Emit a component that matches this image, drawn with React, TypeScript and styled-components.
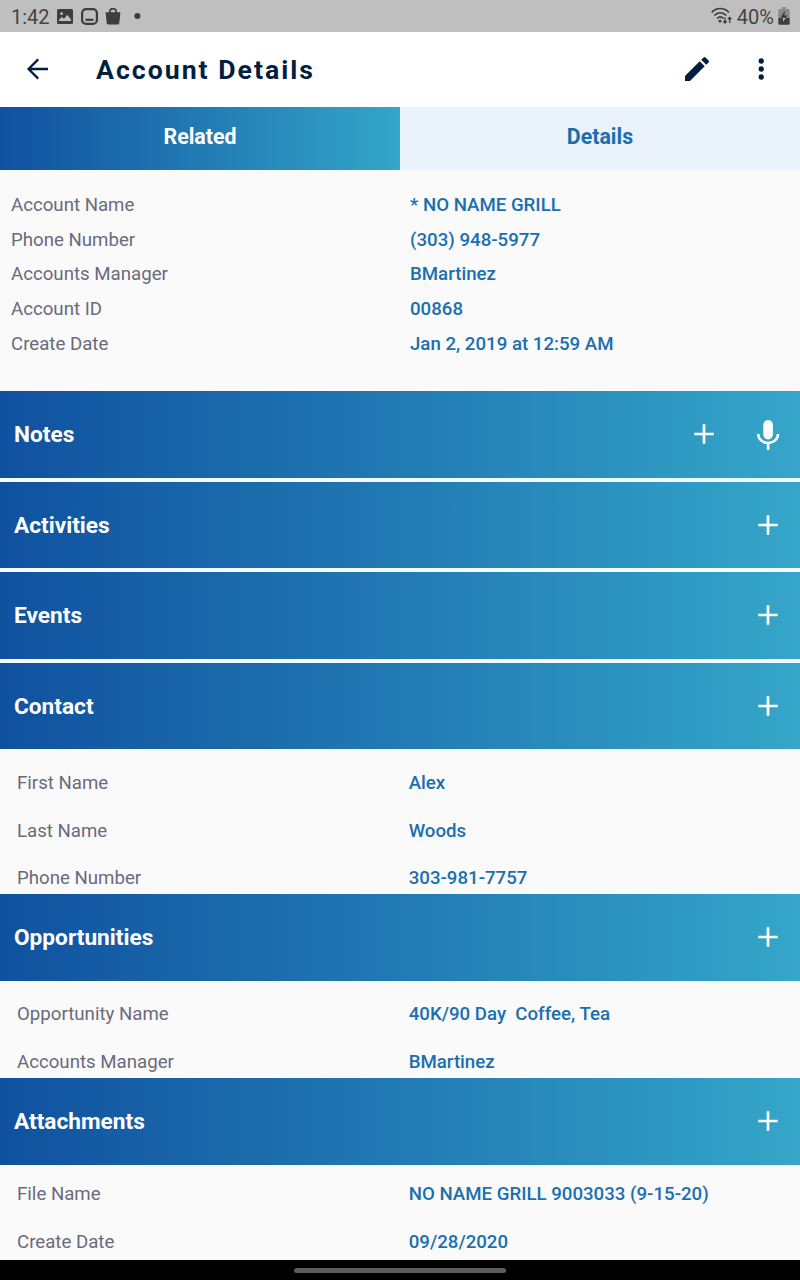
import React from "react";
import styled, { createGlobalStyle } from "styled-components";

const GlobalStyle = createGlobalStyle`
  *, *::before, *::after { box-sizing: border-box; }
  html, body { margin: 0; padding: 0; background: #fafafa; }
  body { font-family: Roboto, "Liberation Sans", sans-serif; }
`;

const brandGradient =
  "linear-gradient(90deg, #10519f 0%, #227ab4 50%, #2f9ac3 86%, #36a6c9 100%)";

const Screen = styled.div`
  width: 800px;
  height: 1280px;
  overflow: hidden;
  display: flex;
  flex-direction: column;
  background: #fafafa;
`;

const StatusBar = styled.header`
  flex: none;
  height: 32px;
  padding: 0 10.5px 0 11px;
  display: flex;
  align-items: center;
  justify-content: space-between;
  background: #bfbfbf;
  color: #444;
  font-size: 20px;
`;

const StatusGroup = styled.div<{ $gap: number }>`
  display: flex;
  align-items: center;
  gap: ${(p) => p.$gap}px;
`;

const StatusText = styled.span`
  line-height: 30px;
  padding-top: 2px;
`;

const AppBar = styled.div`
  flex: none;
  height: 75px;
  padding: 0 23px 2px 21px;
  display: flex;
  align-items: center;
  background: #fff;
  color: #021f41;
`;

const Title = styled.h1`
  flex: 1;
  margin: 0 0 0 43px;
  padding-top: 2px;
  font-size: 26.67px;
  line-height: 32px;
  font-weight: 700;
  letter-spacing: 2px;
`;

const IconButton = styled.button<{ $gap?: number }>`
  flex: none;
  display: flex;
  align-items: center;
  justify-content: center;
  width: 32px;
  height: 32px;
  margin: 0 0 0 ${(p) => p.$gap ?? 0}px;
  padding: 0;
  border: 0;
  background: none;
  color: inherit;
`;

const Tabs = styled.nav`
  flex: none;
  display: grid;
  grid-template-columns: 1fr 1fr;
  height: 63px;
`;

const Tab = styled.button<{ $active?: boolean }>`
  border: 0;
  padding: 0 0 4px;
  font: 700 21.33px/28px Roboto, "Liberation Sans", sans-serif;
  color: ${(p) => (p.$active ? "#fff" : "#1a6fae")};
  background: ${(p) => (p.$active ? brandGradient : "#eaf3fc")};
`;

const Fields = styled.dl<{ $height: number; $top: number; $inset: number; $row: number }>`
  flex: none;
  margin: 0;
  height: ${(p) => p.$height}px;
  padding: ${(p) => p.$top}px 0 0 ${(p) => p.$inset}px;
  display: grid;
  grid-template-columns: ${(p) => (p.$inset > 12 ? 391.7 : 399)}px 1fr;
  grid-auto-rows: ${(p) => p.$row}px;
  align-items: center;
  align-content: start;
  font-size: 18.67px;
  line-height: 24px;
`;

const Label = styled.dt`
  color: #6a6a7c;
`;

const Value = styled.dd`
  margin: 0;
  color: #1a6fae;
  font-weight: 500;
  white-space: pre;
`;

const SectionBar = styled.section<{ $gap?: boolean }>`
  flex: none;
  height: ${(p) => (p.$gap ? 90.5 : 86.5)}px;
  border-bottom: ${(p) => (p.$gap ? "4px solid #f4fbff" : "0")};
  padding: 0 16px 0 14px;
  display: flex;
  align-items: center;
  background: ${brandGradient};
  color: #fff;
`;

const SectionTitle = styled.h2`
  flex: 1;
  margin: 0;
  padding-top: 2px;
  font-size: 22.67px;
  line-height: 28px;
  font-weight: 700;
`;

const HomeBar = styled.footer`
  flex: none;
  height: 20px;
  margin-top: auto;
  display: flex;
  align-items: center;
  justify-content: center;
  background: #000;
`;

const HomeHandle = styled.div`
  width: 212px;
  height: 5px;
  margin-top: 1px;
  border-radius: 3px;
  background: #5d5d5d;
`;

const PlusIcon = () => (
  <svg width="32" height="32" viewBox="0 0 32 32" stroke="currentColor" strokeWidth="2.7">
    <path d="M6.300 16h19.400M16 6.300v19.400" />
  </svg>
);

const MicIcon = () => (
  <svg width="32" height="32" viewBox="0 0 32 32" fill="none">
    <rect x="11.3" y="2" width="9.6" height="19.4" rx="4.8" fill="#fff" />
    <path d="M6.200 16a9.900 9 0 0 0 19.800 0M16.100 25V32" stroke="#fff" strokeWidth="2.600" />
  </svg>
);

const BackIcon = () => (
  <svg width="32" height="32" viewBox="0 0 32 32" fill="none" stroke="currentColor" strokeWidth="2.3">
    <path d="M27 16H7.400M17.200 6.400 7.600 16l9.600 9.600" />
  </svg>
);

const EditIcon = () => (
  <svg width="32" height="32" viewBox="0 0 24 24" fill="currentColor">
    <path d="M3 17.25V21h3.75L17.81 9.94l-3.75-3.75L3 17.25zM20.71 7.04a1 1 0 0 0 0-1.41l-2.34-2.34a1 1 0 0 0-1.41 0l-1.83 1.83 3.75 3.75 1.83-1.83z" />
  </svg>
);

const MoreIcon = () => (
  <svg width="32" height="32" viewBox="0 0 24 24" fill="currentColor">
    <circle cx="12.2" cy="6" r="2" />
    <circle cx="12.2" cy="12" r="2" />
    <circle cx="12.2" cy="18" r="2" />
  </svg>
);

const ImageIcon = () => (
  <svg width="16" height="15" viewBox="0 0 16 15">
    <path
      fillRule="evenodd"
      fill="#3d3d3d"
      d="M1.5 0h13A1.5 1.5 0 0 1 16 1.5v12a1.5 1.5 0 0 1-1.5 1.5h-13A1.5 1.5 0 0 1 0 13.500v-12A1.500 1.500 0 0 1 1.500 0zM2 12h12v-1.500l-3.700-4.700-3.300 4-2.300-1.900L2 10.800zM4.600 3.300a1.400 1.400 0 1 0 0 2.800 1.400 1.400 0 0 0 0-2.800z"
    />
  </svg>
);

const AppIcon = () => (
  <svg width="17" height="17" viewBox="0 0 17 17" fill="none" stroke="#3d3d3d">
    <rect x="1.1" y="1.1" width="14.8" height="14.8" rx="4" strokeWidth="2.200" />
    <path d="M4.500 11.800h8" strokeWidth="2.200" />
  </svg>
);

const BagIcon = () => (
  <svg width="16" height="17" viewBox="0 0 16 17">
    <path d="M0.600 4.300h14.800l-1.100 10.600a1.900 1.900 0 0 1-1.900 1.700H3.600a1.900 1.900 0 0 1-1.900-1.700z" fill="#3d3d3d" />
    <path d="M4.800 5.500V3.800a3.200 3.200 0 0 1 6.400 0v1.700" fill="none" stroke="#3d3d3d" strokeWidth="1.700" />
  </svg>
);

const DotIcon = () => (
  <svg width="12" height="6" viewBox="0 0 12 6">
    <circle cx="8.4" cy="3" r="3" fill="#3d3d3d" />
  </svg>
);

const WifiIcon = () => (
  <svg width="22" height="18" viewBox="0 0 22 18" fill="none" stroke="#3d3d3d" strokeWidth="1.700">
    <path d="M0.700 5.300C5.400 0.200 13.200 0.200 17.900 5.300M3.300 8.500c3.500-3.700 8.500-3.700 12 0M6 11.500c2-1.900 4.500-1.900 6.400-.2" />
    <circle cx="9" cy="14" r="1.500" fill="#3d3d3d" stroke="none" />
    <path d="M14 10.500v5.500M12.300 14.200l1.700 1.800 1.700-1.800M18.700 16v-5.500M17 12.300l1.700-1.800 1.700 1.800" strokeWidth="1.300" />
  </svg>
);

const BatteryIcon = () => (
  <svg width="12" height="18" viewBox="0 0 12 17" preserveAspectRatio="none">
    <path d="M4 0h4v2h2.500A1.200 1.200 0 0 1 11.700 3.200V11H.3V3.200A1.200 1.200 0 0 1 1.500 2H4z" fill="#8b8b8b" />
    <path d="M.3 10.500h11.400v5a1.200 1.200 0 0 1-1.200 1.200h-9A1.200 1.200 0 0 1 .3 15.500z" fill="#3d3d3d" />
    <path d="M6.800 3.500 2.500 9.800h3L5 14l4.500-6H6.500z" fill="#3d3d3d" />
    <path d="M5.300 10.500h2.300L5 14z" fill="#d6d6d6" />
  </svg>
);

type Row = [label: string, value: string];

const account: Row[] = [
  ["Account Name", "* NO NAME GRILL"],
  ["Phone Number", "(303) 948-5977"],
  ["Accounts Manager", "BMartinez"],
  ["Account ID", "00868"],
  ["Create Date", "Jan 2, 2019 at 12:59 AM"],
];

interface SectionData {
  title: string;
  mic?: boolean;
  rows?: Row[];
  height?: number;
  top?: number;
}

const sections: SectionData[] = [
  { title: "Notes", mic: true },
  { title: "Activities" },
  { title: "Events" },
  {
    title: "Contact",
    height: 145,
    top: 10.15,
    rows: [
      ["First Name", "Alex"],
      ["Last Name", "Woods"],
      ["Phone Number", "303-981-7757"],
    ],
  },
  {
    title: "Opportunities",
    height: 97.5,
    top: 9.65,
    rows: [
      ["Opportunity Name", "40K/90 Day  Coffee, Tea"],
      ["Accounts Manager", "BMartinez"],
    ],
  },
  {
    title: "Attachments",
    height: 95,
    top: 5.65,
    rows: [
      ["File Name", "NO NAME GRILL 9003033 (9-15-20)"],
      ["Create Date", "09/28/2020"],
    ],
  },
];

interface FieldListProps {
  rows: Row[];
  height: number;
  top: number;
  inset: number;
  row: number;
}

const FieldList = ({ rows, height, top, inset, row }: FieldListProps) => (
  <Fields $height={height} $top={top} $inset={inset} $row={row}>
    {rows.map(([label, value]) => (
      <React.Fragment key={label}>
        <Label>{label}</Label>
        <Value>{value}</Value>
      </React.Fragment>
    ))}
  </Fields>
);

export default function App() {
  return (
    <Screen>
      <GlobalStyle />
      <StatusBar>
        <StatusGroup $gap={7.6}>
          <StatusText>1:42</StatusText>
          <ImageIcon />
          <AppIcon />
          <BagIcon />
          <DotIcon />
        </StatusGroup>
        <StatusGroup $gap={3.5}>
          <WifiIcon />
          <StatusText>40%</StatusText>
          <BatteryIcon />
        </StatusGroup>
      </StatusBar>
      <AppBar>
        <IconButton aria-label="Back"><BackIcon /></IconButton>
        <Title>Account Details</Title>
        <IconButton aria-label="Edit"><EditIcon /></IconButton>
        <IconButton aria-label="More" $gap={32}><MoreIcon /></IconButton>
      </AppBar>
      <Tabs>
        <Tab $active>Related</Tab>
        <Tab>Details</Tab>
      </Tabs>
      <FieldList rows={account} height={221} top={17.65} inset={11} row={34.67} />
      {sections.map((s) => (
        <React.Fragment key={s.title}>
          <SectionBar $gap={!s.rows}>
            <SectionTitle>{s.title}</SectionTitle>
            <IconButton aria-label={`Add to ${s.title}`}><PlusIcon /></IconButton>
            {s.mic && <IconButton aria-label="Record note" $gap={32}><MicIcon /></IconButton>}
          </SectionBar>
          {s.rows && (
            <FieldList rows={s.rows} height={s.height!} top={s.top!} inset={17} row={47.67} />
          )}
        </React.Fragment>
      ))}
      <HomeBar><HomeHandle /></HomeBar>
    </Screen>
  );
}
